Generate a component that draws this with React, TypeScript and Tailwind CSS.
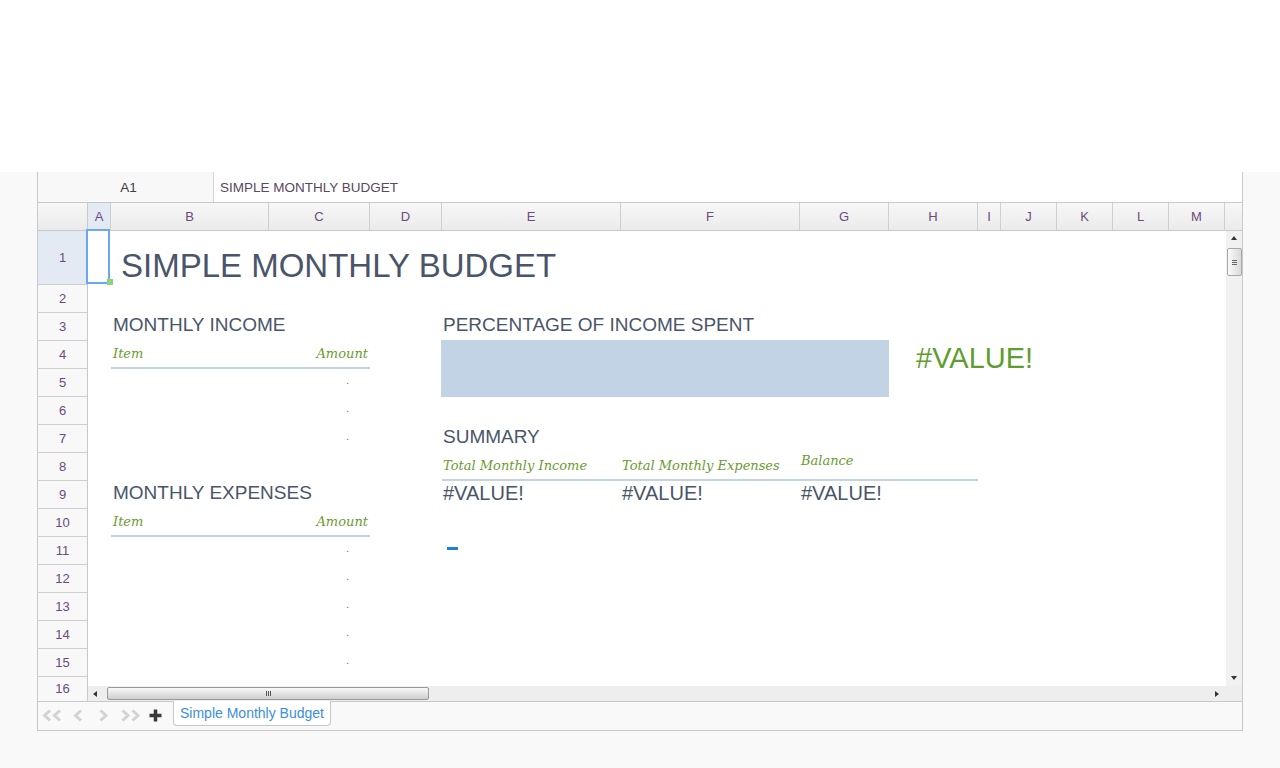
import React from 'react';

const COLS = [
  { id: 'A', cls: 'w-[23px] bg-[#e3eaf3]' },
  { id: 'B', cls: 'w-[158px]' },
  { id: 'C', cls: 'w-[101px]' },
  { id: 'D', cls: 'w-[72px]' },
  { id: 'E', cls: 'w-[179px]' },
  { id: 'F', cls: 'w-[179px]' },
  { id: 'G', cls: 'w-[89px]' },
  { id: 'H', cls: 'w-[89px]' },
  { id: 'I', cls: 'w-[23px]' },
  { id: 'J', cls: 'w-[56px]' },
  { id: 'K', cls: 'w-[56px]' },
  { id: 'L', cls: 'w-[56px]' },
  { id: 'M', cls: 'w-[56px]' },
];

const ROWS = Array.from({ length: 16 }, (_, i) => i + 1);

const serif = "font-['DejaVu_Serif',serif] italic text-[13px] leading-none text-[#6b9b30]";
const heading = 'text-[19px] leading-none text-[#4a5569] whitespace-nowrap';

// empty currency cells render a lone dot
const Dot = ({ row }: { row: string }) => (
  <div className={`col-start-3 ${row} flex items-center justify-end pb-[4px] pr-[21px] text-[10px] leading-none text-[#666]`}>.</div>
);

const TableHead = ({ row }: { row: string }) => (
  <div className={`col-span-2 col-start-2 ${row} flex justify-between border-b-2 border-[#c4d4e4] px-[2px] pt-[6px] ${serif}`}>
    <span>Item</span>
    <span>Amount</span>
  </div>
);

const Chevrons = ({ dir, double }: { dir: 'left' | 'right'; double?: boolean }) => {
  const one = dir === 'left' ? 'M8 1.5 L2.5 6.5 L8 11.5' : 'M2.5 1.5 L8 6.5 L2.5 11.5';
  const two = dir === 'left' ? 'M18 1.5 L12.5 6.5 L18 11.5' : 'M12.5 1.5 L18 6.5 L12.5 11.5';
  return (
    <svg width={double ? 21 : 11} height={13} viewBox={`0 0 ${double ? 21 : 11} 13`} fill="none" stroke="#d3d3d3" strokeWidth="3">
      <path d={one} />
      {double && <path d={two} />}
    </svg>
  );
};

export default function App() {
  return (
    <div className="min-h-screen bg-[#f9f9f9] font-['Liberation_Sans',Arial,sans-serif]">
      <div className="h-[172px] bg-white" />

      <div className="ml-[37px] w-[1206px] border-x border-b border-[#c9c9c9] bg-white">
        {/* formula bar */}
        <div className="flex h-[31px] border-b border-[#c9c9c9]">
          <div className="flex w-[176px] items-center justify-center border-r border-[#d6d6d6] bg-[#f8f8f8] pl-[6px] pt-[2px] text-[13.5px] text-[#3d3d3d]">A1</div>
          <div className="flex flex-1 items-center pl-[6px] pt-[2px] text-[13.5px] text-[#5b4762]">SIMPLE MONTHLY BUDGET</div>
        </div>

        {/* column headers */}
        <div className="flex h-[28px] border-b border-[#c9c9c9] bg-gradient-to-b from-[#f7f7f7] to-[#ebebeb] text-[13px] text-[#6b4a7e]">
          <div className="w-[50px] border-r border-[#c9c9c9]" />
          {COLS.map(c => (
            <div key={c.id} className={`flex items-center justify-center border-r border-[#cfcfcf] ${c.cls}`}>{c.id}</div>
          ))}
          <div className="flex-1" />
        </div>

        {/* sheet body */}
        <div className="flex h-[470px]">
          <div className="w-[50px] shrink-0 border-r border-[#c9c9c9] bg-[#f8f8f8] text-[13px] text-[#6b4a7e]">
            {ROWS.map(r => (
              <div
                key={r}
                className={`flex items-center justify-center ${r === 1 ? 'h-[54px] bg-[#e3eaf3]' : r === 16 ? 'h-[24px]' : 'h-[28px]'} ${r < 16 ? 'border-b border-[#cfcfcf]' : ''}`}
              >
                {r}
              </div>
            ))}
          </div>

          <div className="flex w-[1154px] flex-col">
            <div className="flex h-[455px]">
              <div className="grid flex-1 grid-cols-[23px_158px_101px_72px_179px_179px_89px_89px_23px_56px_56px_56px_56px] grid-rows-[54px_repeat(14,28px)] content-start">
                {/* active cell */}
                <div className="relative col-start-1 row-start-1">
                  <div className="absolute -left-[2px] -top-[2px] bottom-[1px] right-[1px] border-2 border-[#6aa8ef]" />
                  <div className="absolute -right-[2px] bottom-[0px] h-[6px] w-[6px] bg-[#8fd27a]" />
                </div>

                <div className="col-span-8 col-start-2 row-start-1 pl-[10px] pt-[18px] text-[33px] leading-none text-[#4a5569] whitespace-nowrap">SIMPLE MONTHLY BUDGET</div>

                {/* income */}
                <div className={`col-span-2 col-start-2 row-start-3 pl-[2px] pt-[2px] ${heading}`}>MONTHLY INCOME</div>
                <TableHead row="row-start-4" />
                <Dot row="row-start-5" />
                <Dot row="row-start-6" />
                <Dot row="row-start-7" />

                {/* expenses */}
                <div className={`col-span-2 col-start-2 row-start-9 pl-[2px] pt-[2px] ${heading}`}>MONTHLY EXPENSES</div>
                <TableHead row="row-start-10" />
                <Dot row="row-start-11" />
                <Dot row="row-start-12" />
                <Dot row="row-start-13" />
                <Dot row="row-start-14" />
                <Dot row="row-start-15" />

                {/* percentage */}
                <div className={`col-span-4 col-start-5 row-start-3 pl-[1px] pt-[2px] ${heading}`}>PERCENTAGE OF INCOME SPENT</div>
                <div className="col-span-3 col-start-5 row-span-2 row-start-4 -ml-px -mt-px bg-[#c1d3e4]" />
                <div className="col-span-3 col-start-8 row-span-2 row-start-4 pl-[27px] pt-[3px] text-[29px] leading-none text-[#5f9e2e] whitespace-nowrap">#VALUE!</div>

                {/* summary */}
                <div className={`col-span-2 col-start-5 row-start-7 pl-[1px] pt-[2px] ${heading}`}>SUMMARY</div>
                <div className={`col-start-5 row-start-8 border-b-2 border-[#c4d4e4] pl-[1px] pt-[6px] whitespace-nowrap ${serif}`}>Total Monthly Income</div>
                <div className={`col-start-6 row-start-8 border-b-2 border-[#c4d4e4] pl-[1px] pt-[6px] whitespace-nowrap ${serif}`}>Total Monthly Expenses</div>
                <div className={`col-span-2 col-start-7 row-start-8 border-b-2 border-[#c4d4e4] pl-[1px] pt-[1px] ${serif}`}>Balance</div>
                <div className="col-start-5 row-start-9 pl-[1px] pt-[2px] text-[20px] leading-none text-[#4a5569]">#VALUE!</div>
                <div className="col-start-6 row-start-9 pl-[1px] pt-[2px] text-[20px] leading-none text-[#4a5569]">#VALUE!</div>
                <div className="col-span-2 col-start-7 row-start-9 pl-[1px] pt-[2px] text-[20px] leading-none text-[#4a5569]">#VALUE!</div>

                <div className="col-start-5 row-start-11 pl-[5px] pt-[10px]">
                  <div className="h-[3px] w-[11px] bg-[#1f7ee2]" />
                </div>
              </div>

              {/* vertical scrollbar */}
              <div className="flex w-[16px] flex-col items-center bg-[#f1f1f1] pt-[5px]">
                <div className="h-0 w-0 border-x-[3px] border-b-[4px] border-x-transparent border-b-[#333]" />
                <div className="mt-[8px] flex h-[28px] w-[15px] flex-col items-center justify-center gap-[1px] rounded-[2px] border border-[#a8a8a8] bg-gradient-to-r from-[#fbfbfb] to-[#dadada]">
                  <div className="h-px w-[5px] bg-[#666]" />
                  <div className="h-px w-[5px] bg-[#666]" />
                  <div className="h-px w-[5px] bg-[#666]" />
                </div>
                <div className="flex-1" />
                <div className="mb-[6px] h-0 w-0 border-x-[3px] border-t-[4px] border-x-transparent border-t-[#333]" />
              </div>
            </div>

            {/* horizontal scrollbar */}
            <div className="flex h-[15px] items-center bg-[#eeeeee] pl-[5px] pr-[23px]">
              <div className="h-0 w-0 border-y-[3px] border-r-[4px] border-y-transparent border-r-[#333]" />
              <div className="ml-[10px] flex h-[13px] w-[322px] items-center justify-center gap-[1px] rounded-[2px] border border-[#9a9a9a] bg-gradient-to-b from-[#f8f8f8] to-[#cfcfcf]">
                <div className="h-[5px] w-px bg-[#555]" />
                <div className="h-[5px] w-px bg-[#555]" />
                <div className="h-[5px] w-px bg-[#555]" />
              </div>
              <div className="flex-1" />
              <div className="h-0 w-0 border-y-[3px] border-l-[4px] border-y-transparent border-l-[#333]" />
            </div>
          </div>
        </div>

        {/* sheet tabs */}
        <div className="flex h-[29px] items-start border-t border-[#c9c9c9] bg-[#f9f9f9]">
          <div className="flex h-[27px] items-center">
            <div className="ml-[4px]"><Chevrons dir="left" double /></div>
            <div className="ml-[10px]"><Chevrons dir="left" /></div>
            <div className="ml-[14px]"><Chevrons dir="right" /></div>
            <div className="ml-[11px]"><Chevrons dir="right" double /></div>
            <svg className="ml-[8px]" width="13" height="13" viewBox="0 0 13 13" fill="none" stroke="#3a3a3a" strokeWidth="3.5">
              <path d="M6.5 0.5 V12.5 M0.5 6.5 H12.5" />
            </svg>
          </div>
          <div className="-mt-px ml-[11px] flex h-[25px] items-center rounded-b-[4px] border border-t-0 border-[#c6c6c6] bg-white px-[6px] text-[14px] text-[#3a8ee0]">
            Simple Monthly Budget
          </div>
        </div>
      </div>
    </div>
  );
}
